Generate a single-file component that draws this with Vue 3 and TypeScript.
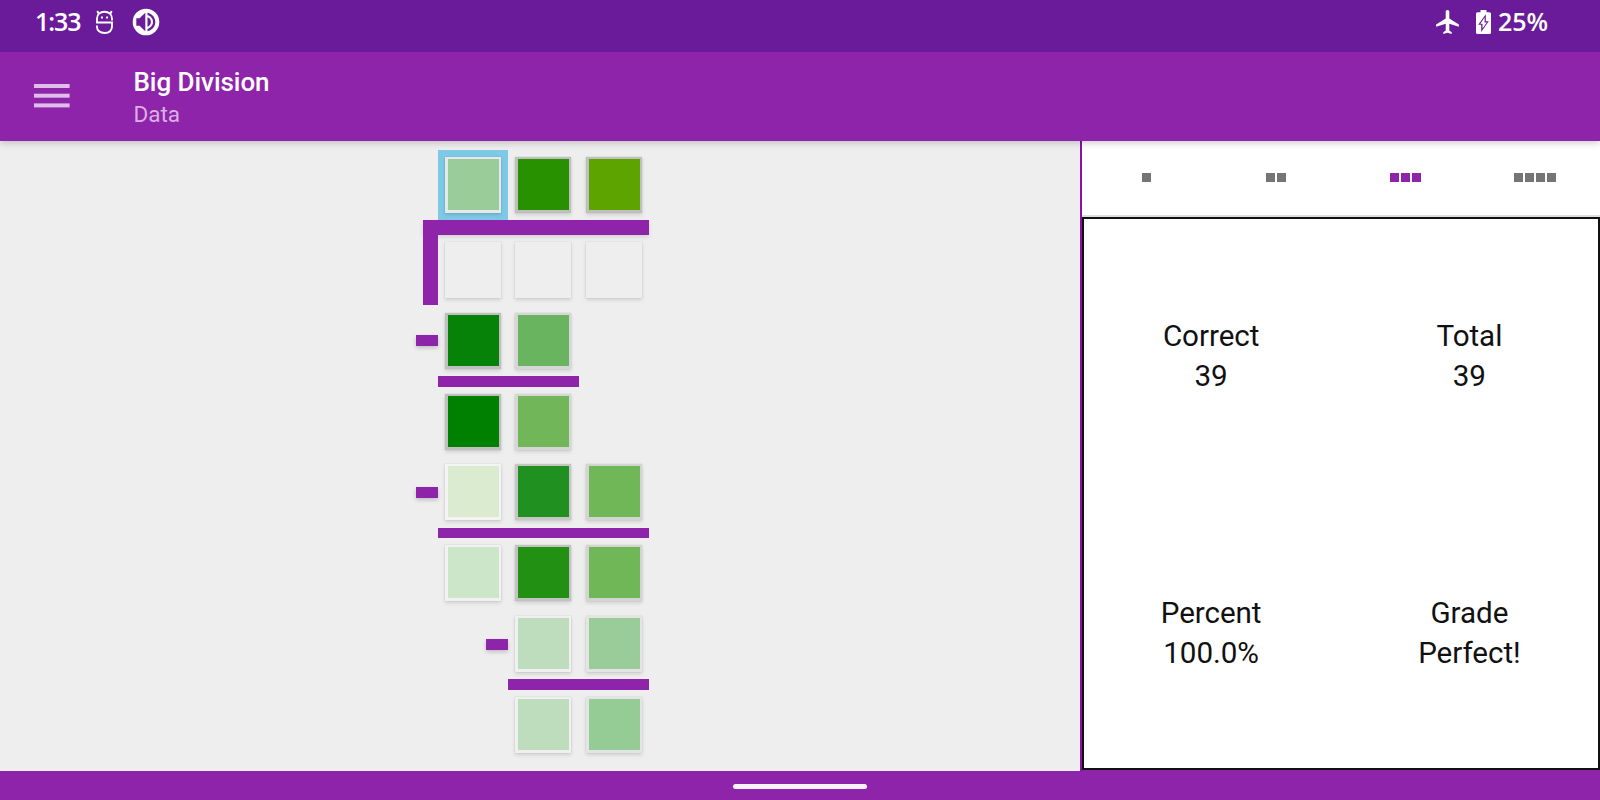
<script setup lang="ts">
interface Row {
  kind: 'cells' | 'head' | 'rule'
  cells?: (string | null)[]
  minus?: number
  start?: number
  span?: number
}

const rows: Row[] = [
  { kind: 'cells', cells: ['#9acc99 #e8e8e8 sel', '#289100 #bfbfbf', '#5ea400 #bfbfbf'] },
  { kind: 'head' },
  { kind: 'cells', cells: ['#eeeeee #eeeeee', '#eeeeee #eeeeee', '#eeeeee #eeeeee'] },
  { kind: 'cells', cells: ['#078209 #bfbfbf', '#69b45e #d6d6d6', null], minus: 0 },
  { kind: 'rule', start: 0, span: 2 },
  { kind: 'cells', cells: ['#008000 #bfbfbf', '#71b759 #d6d6d6', null] },
  { kind: 'cells', cells: ['#dbebcf #f4f4f4', '#209020 #c6c6c6', '#70b758 #d4d4d4'], minus: 0 },
  { kind: 'rule', start: 0, span: 3 },
  { kind: 'cells', cells: ['#cbe6c8 #f2f2f2', '#229013 #c2c2c2', '#70b758 #d4d4d4'] },
  { kind: 'cells', cells: [null, '#bdddbd #f0f0f0', '#99cc99 #e4e4e4'], minus: 1 },
  { kind: 'rule', start: 1, span: 2 },
  { kind: 'cells', cells: [null, '#bdddbd #f0f0f0', '#95cb95 #e4e4e4'] },
]

const fill = (c: string) => {
  const [bg, edge] = c.split(' ')
  return { background: bg, borderColor: edge }
}

const stats = [
  ['Correct', '39'],
  ['Total', '39'],
  ['Percent', '100.0%'],
  ['Grade', 'Perfect!'],
]
const activeTab = 3
</script>

<template>
  <div class="screen">
    <div class="status">
      <span class="clock">1:33</span>
      <svg class="bot" width="19" height="26" viewBox="0 0 19 26" fill="none" stroke="#fff" stroke-width="1.9">
        <path d="M17 11.500V9.500C17 5.500 14 2.800 9.500 2.800S2 5.500 2 9.500V13.500H17V17C17 21.500 14 24 9.500 24S2 21.500 2 18V16.500M3.800 5 2.300 2M15.200 5 16.700 2" />
        <path d="M6 8.500h1.900M11.100 8.500H13" />
      </svg>
      <svg class="sound" width="28" height="28" viewBox="0 0 28 28">
        <circle cx="14" cy="14" r="13.300" fill="#fff" />
        <path d="M4.300 10.200H7.500L13.300 4.800V23.200L7.500 17.800H4.300Z" fill="#6a1b9a" />
        <path d="M15.500 9.300c2.200.8 3.400 2.600 3.400 4.700s-1.200 3.900-3.400 4.700ZM15.500 4.700c4.600 1 7.800 4.800 7.800 9.300s-3.200 8.300-7.800 9.300v-2.400c3.300-1 5.500-3.700 5.500-6.900s-2.200-5.900-5.500-6.900Z" fill="#6a1b9a" />
      </svg>
      <span class="grow"></span>
      <svg class="plane" width="23" height="24" viewBox="2 2 19 20">
        <path fill="#fff" d="M21 16v-2l-8-5V3.500c0-.83-.67-1.500-1.500-1.500S10 2.670 10 3.500V9l-8 5v2l8-2.500V19l-2 1.500V22l3.500-1 3.500 1v-1.500L13 19v-5.500l8 2.500z" />
      </svg>
      <svg class="battery" width="15" height="24" viewBox="0 0 15 24">
        <path fill="#fff" fill-rule="evenodd" d="M4.500 0h6v2.300H13.500q1.500 0 1.500 1.500V22.500Q15 24 13.500 24H1.500Q0 24 0 22.500V3.800Q0 2.300 1.500 2.300H4.500ZM9.800 4.300 2.200 14.800H5.200V22L12.800 11.300H9.800Z" />
        <path fill="#fff" d="M8.600 7.600V12.500H10.800L6.500 18.500V13.700H4.300Z" />
      </svg>
      <span class="pct">25%</span>
    </div>

    <header class="bar">
      <svg class="menu" width="36" height="25" viewBox="0 0 36 25" fill="#dfbee7">
        <rect x="0" y="0" width="35.600" height="4" />
        <rect x="0" y="9.700" width="35.600" height="4" />
        <rect x="0" y="19.400" width="35.600" height="4" />
      </svg>
      <div class="titles">
        <div class="title">Big Division</div>
        <div class="sub">Data</div>
      </div>
    </header>

    <main class="body">
      <section class="board">
        <div class="work">
          <template v-for="(r, i) in rows" :key="i">
            <div v-if="r.kind === 'cells'" class="row">
              <div v-for="(c, j) in r.cells" :key="j" class="slot" :class="{ selected: c?.endsWith('sel') }">
                <div v-if="c" class="card" :style="fill(c)"></div>
                <div v-if="r.minus === j" class="minus"></div>
              </div>
            </div>
            <div v-else-if="r.kind === 'head'" class="head"><div class="side"></div></div>
            <div v-else class="row rule-row">
              <div v-if="r.start" class="slot"></div>
              <div class="rule" :class="'span' + r.span"></div>
            </div>
          </template>
        </div>
      </section>

      <aside class="panel">
        <nav class="tabs">
          <div v-for="n in 4" :key="n" class="tab" :class="{ active: n === activeTab }">
            <i v-for="k in n" :key="k"></i>
          </div>
        </nav>
        <div class="stats">
          <div v-for="s in stats" :key="s[0]" class="stat">
            <div>{{ s[0] }}</div>
            <div>{{ s[1] }}</div>
          </div>
        </div>
      </aside>
    </main>

    <footer class="nav"><div class="pill"></div></footer>
  </div>
</template>

<style>
body { margin: 0; overflow: hidden; }
</style>

<style scoped>
* { box-sizing: border-box; }
.screen { width: 1600px; height: 800px; display: flex; flex-direction: column; overflow: hidden; font-family: Roboto, sans-serif; background: #eee; }
.status { height: 52px; flex: none; background: #6a1b9a; display: flex; position: relative; z-index: 3; align-items: flex-start; padding: 0 52px 0 35px; color: #fff; font: 600 25px/43px "Open Sans", sans-serif; }
.clock { width: 60px; letter-spacing: -1.100px; }
.bot { margin-top: 9px; }
.sound { margin: 8px 0 0 17.500px; }
.grow { flex: 1; }
.plane { margin: 10px 17px 0 0; }
.battery { margin: 10px 7px 0 0; }
.pct { width: 50px; white-space: nowrap; }
.bar { height: 88.500px; flex: none; background: #8e24aa; display: flex; position: relative; z-index: 2; box-shadow: 0 2px 7px rgba(0, 0, 0, .2); }
.menu { margin: 32px 0 0 34px; }
.titles { margin-left: 63.500px; padding-top: 14px; }
.title { color: #fff; font-weight: 500; font-size: 26px; line-height: 32px; letter-spacing: -.05px; }
.sub { color: #d9b0e2; font-size: 22.500px; line-height: 33px; }
.body { flex: 1; display: flex; min-height: 0; }
.board { width: 1079.500px; flex: none; padding: 9.100px 0 0 438px; }
.work { width: 211px; }
.row { display: flex; height: 70.500px; }
.slot { width: 70.330px; flex: none; padding: 7.200px 7px; position: relative; }
.selected { background: #7ecae6; }
.card { width: 56px; height: 56px; border-style: solid; border-width: 2px 2px 3px 3px; box-shadow: 0 2px 4px rgba(0, 0, 0, .13), 0 0 1px rgba(0, 0, 0, .2); }
.minus { position: absolute; right: 100%; top: 29.800px; width: 22px; height: 11px; background: #8e24aa; box-shadow: 0 2px 4px rgba(0, 0, 0, .2); }
.head { height: 15px; margin-left: -15px; background: #8e24aa; box-shadow: 0 2px 4px rgba(0, 0, 0, .12); }
.side { width: 15px; height: 85px; background: #8e24aa; }
.rule-row { height: 10.600px; }
.rule { background: #8e24aa; height: 10.600px; }
.span2 { width: 140.600px; }
.span3 { width: 211px; }
.panel { flex: 1; border-left: 2px solid #8c0fa8; background: #8e24aa; display: flex; flex-direction: column; }
.tabs { height: 76.500px; flex: none; display: flex; background: #fff; border-bottom: 2px solid #dedede; }
.tab { flex: 1; display: flex; gap: 2px; justify-content: center; padding-top: 32.500px; }
.tab i { width: 9px; height: 9px; background: #757575; }
.tab.active i { background: #8e24aa; }
.stats { flex: 1; margin-bottom: 1px; background: #fff; border: 2px solid #111; display: grid; grid-template: 1fr 1fr / 1fr 1fr; }
.stat { display: flex; flex-direction: column; align-items: center; justify-content: center; font-size: 29.600px; font-weight: 400; line-height: 40px; letter-spacing: -.05px; color: #111; }
.stat:nth-child(odd) { padding-right: 2px; }
.stat:nth-child(n + 3) { padding-top: 5px; }
.nav { height: 29.500px; flex: none; background: #8e24aa; display: flex; justify-content: center; padding-top: 13.500px; }
.pill { width: 134px; height: 5px; border-radius: 3px; background: #fbf3fc; }
</style>
